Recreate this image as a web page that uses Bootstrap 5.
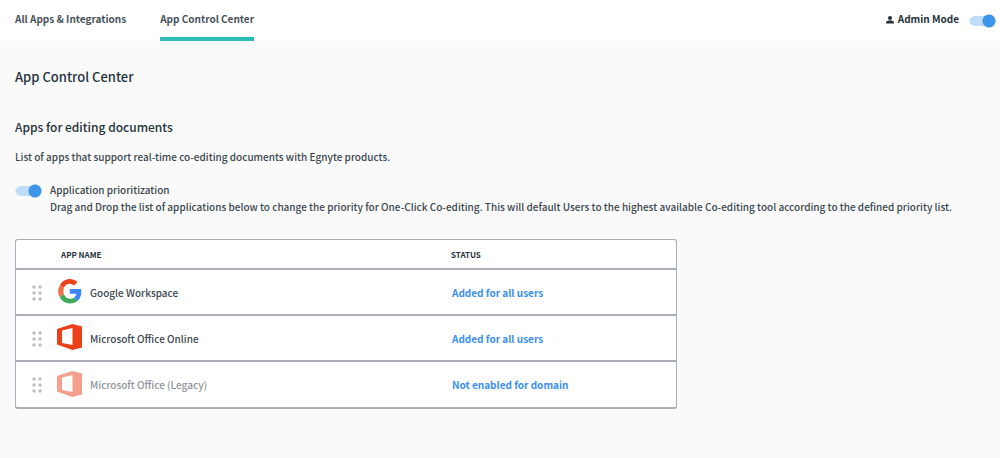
<!DOCTYPE html>
<html lang="en">
<head>
<meta charset="utf-8">
<meta name="viewport" content="width=device-width, initial-scale=1">
<title>App Control Center</title>
<link href="https://cdn.jsdelivr.net/npm/bootstrap@5.3.0/dist/css/bootstrap.min.css" rel="stylesheet">
<style>
  body { font-family: "Noto Sans CJK SC", "Open Sans", sans-serif; font-size: 10px; font-weight: 500; line-height: 17px; color: #3b4850; background: #fafafa; min-height: 100vh; }
  .topbar { height: 41px; background: #fff; padding: 0 4px 0 15px; }
  .tabs { gap: 34px; }
  .tab-link { font-weight: 700; color: #46535b; text-decoration: none; padding-top: 10px; border-bottom: 4px solid transparent; }
  .tab-link.current { border-bottom-color: #2bbcb6; }
  .admin-label { font-weight: 700; color: #26323a; padding-top: 2px; }
  .toggle { appearance: none; flex: none; width: 27px; height: 14px; margin: 0; cursor: pointer;
    background: radial-gradient(circle at 20px 7px, #3d96e9 6px, transparent 7px), linear-gradient(#bfdcf8, #bfdcf8) 5px 2px / 15px 10px no-repeat, radial-gradient(circle at 5px 7px, #bfdcf8 4px, transparent 5px); }
  .topbar .toggle { margin: 6px 0 0 10px; }
  main { padding: 26px 15px; }
  h1 { font-size: 13px; line-height: 20px; font-weight: 500; color: #26323a; margin: 0 0 31px; }
  h2 { font-size: 12px; line-height: 18px; font-weight: 500; color: #26323a; margin: 0 0 12px; }
  .priority { gap: 8px; margin: 16px 0 24px; }
  .priority .toggle { margin-top: 3px; }
  .apps { max-width: 662px; background: #fff; border: 1px solid #a9afb6; border-bottom-width: 2px; border-radius: 3px; }
  .apps table { width: 100%; table-layout: fixed; border-collapse: collapse; }
  .apps thead th { height: 29px; padding: 0; font-size: 8px; font-weight: 700; color: #26323a; }
  .apps tbody tr { height: 46px; border-top: 2px solid #a9afb6; }
  .apps td { padding: 0; }
  .grip { width: 45px; }
  .name { width: 390px; }
  .grip svg, .name-box svg { display: block; flex: none; }
  .grip button { border: 0; padding: 0; margin-left: 16px; background: none; display: block; cursor: grab; }
  .name-box { gap: 8px; margin: -2px 0 0 -4px; }
  .name-box span { padding-top: 2px; }
  .apps a { font-weight: 700; color: #3a8ff3; text-decoration: none; margin-left: 1px; }
  .faded svg { opacity: .5; }
  .faded span { color: #8d949b; }
</style>
</head>
<body>
<svg width="0" height="0" class="position-absolute" aria-hidden="true">
  <symbol id="dots" viewBox="0 0 12 17"><g fill="#b9bec4"><circle cx="2" cy="3" r="1.7"/><circle cx="8" cy="3" r="1.7"/><circle cx="2" cy="9" r="1.7"/><circle cx="8" cy="9" r="1.7"/><circle cx="2" cy="15" r="1.7"/><circle cx="8" cy="15" r="1.7"/></g></symbol>
  <symbol id="office" viewBox="0 0 26 26"><path fill="#eb4019" fill-rule="evenodd" d="M0 5 15.500 0 25 2.500v21L15.500 26 0 20.500 5 19l10.500 2V4L5 6.500V19L0 20.500Z"/></symbol>
</svg>
<header class="topbar d-flex justify-content-between">
  <nav class="tabs d-flex" aria-label="Sections">
    <a class="tab-link" href="#all">All Apps &amp; Integrations</a>
    <a class="tab-link current" href="#control" aria-current="page">App Control Center</a>
  </nav>
  <div class="d-flex align-items-start pt-2">
    <svg width="8" height="8" viewBox="0 0 8 8" class="me-1 mt-2" aria-hidden="true"><circle cx="4" cy="2" r="2" fill="#26323a"/><path d="M0 7.500V6.300C0 5.100 2 4.600 4 4.600s4 .5 4 1.700v1.200Z" fill="#26323a"/></svg>
    <label class="admin-label" for="admin">Admin Mode</label>
    <input class="toggle" type="checkbox" role="switch" id="admin" checked>
  </div>
</header>
<main>
  <h1>App Control Center</h1>
  <h2>Apps for editing documents</h2>
  <p class="mb-0">List of apps that support real-time co-editing documents with Egnyte products.</p>
  <div class="priority d-flex align-items-start">
    <input class="toggle" type="checkbox" role="switch" id="prio" checked aria-describedby="prio-help">
    <div>
      <label class="d-block" for="prio">Application prioritization</label>
      <div id="prio-help">Drag and Drop the list of applications below to change the priority for One-Click Co-editing. This will default Users to the highest available Co-editing tool according to the defined priority list.</div>
    </div>
  </div>
  <div class="apps">
    <table>
      <thead><tr><th class="grip" aria-label="Order"></th><th class="name" scope="col">APP NAME</th><th scope="col">STATUS</th></tr></thead>
      <tbody>
        <tr>
          <td><div class="grip"><button type="button" aria-label="Move Google Workspace"><svg width="12" height="17"><use href="#dots"/></svg></button></div></td>
          <td><div class="name-box d-flex align-items-center">
            <svg width="25" height="26" viewBox="0 0 26 26" aria-hidden="true"><path fill="#eb4019" d="M3 7C5 3 9 .5 13.300.5c3 0 5.700 1.100 8 3.100l-3.700 3.700c-3.600-3.200-8.700-2-10.400 2.500Z"/><path fill="#f0704b" d="M3 7 7.200 9.800C6.500 12 6.500 14.500 7.200 16.500L3 19.500C.5 15.500.5 11 3 7Z"/><path fill="#3eaa55" d="m3 19.500 4.200-3c2 5 7 5.700 10.400 3.400l4 3.200C15.500 28 6.500 26.500 3 19.500Z"/><path fill="#3a86f5" d="M13.300 10.800H25c.8 5-.4 9.500-3.400 12.300l-4-3.200c1.200-.8 2.200-2.200 2.500-4h-6.800Z"/></svg>
            <span>Google Workspace</span></div></td>
          <td><a href="#google">Added for all users</a></td>
        </tr>
        <tr>
          <td><div class="grip"><button type="button" aria-label="Move Microsoft Office Online"><svg width="12" height="17"><use href="#dots"/></svg></button></div></td>
          <td><div class="name-box d-flex align-items-center"><svg width="25" height="26" viewBox="0 0 25 26" aria-hidden="true"><use href="#office" width="26" height="26"/></svg><span>Microsoft Office Online</span></div></td>
          <td><a href="#office-online">Added for all users</a></td>
        </tr>
        <tr>
          <td><div class="grip"><button type="button" aria-label="Move Microsoft Office (Legacy)"><svg width="12" height="17"><use href="#dots"/></svg></button></div></td>
          <td><div class="name-box faded d-flex align-items-center"><svg width="25" height="26" viewBox="0 0 25 26" aria-hidden="true"><use href="#office" width="26" height="26"/></svg><span>Microsoft Office (Legacy)</span></div></td>
          <td><a href="#office-legacy">Not enabled for domain</a></td>
        </tr>
      </tbody>
    </table>
  </div>
</main>
<script src="https://cdn.jsdelivr.net/npm/bootstrap@5.3.0/dist/js/bootstrap.bundle.min.js"></script>
</body>
</html>
